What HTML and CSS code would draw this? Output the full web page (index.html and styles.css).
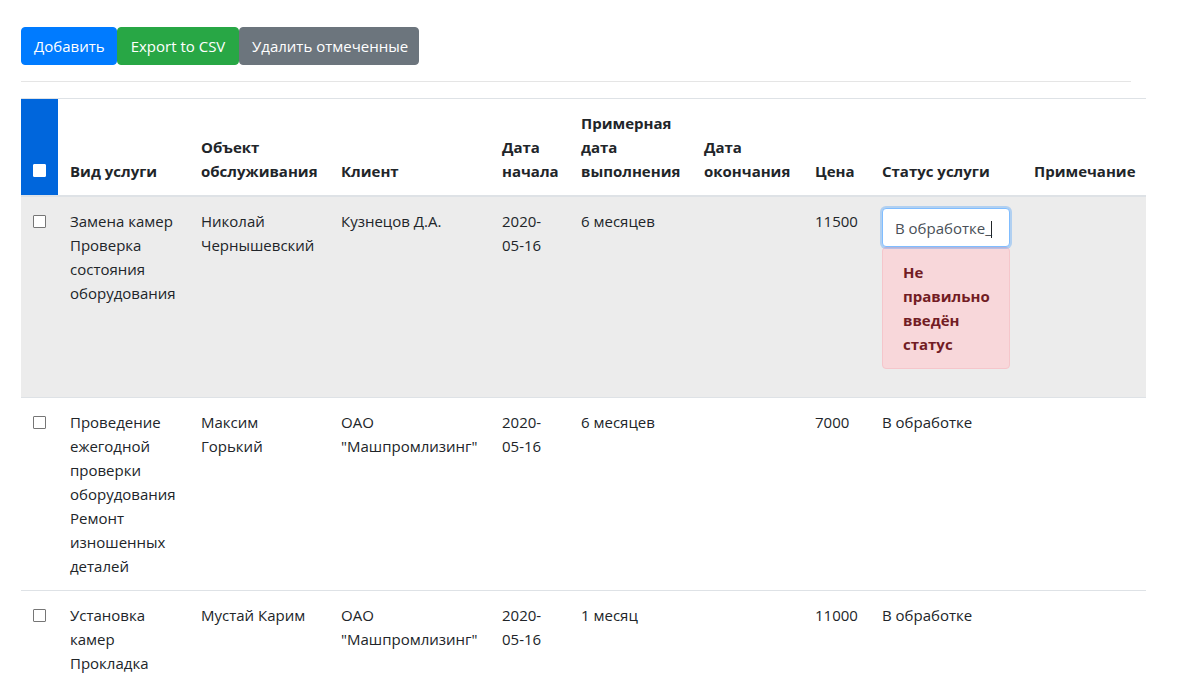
FILE: index.html
```html
<!DOCTYPE html>
<html lang="ru">
<head>
<meta charset="utf-8">
<title>Услуги</title>
<link rel="stylesheet" href="styles.css">
</head>
<body>
<div class="page">
  <div class="toolbar">
    <button class="btn btn-blue">Добавить</button><button class="btn btn-green">Export to CSV</button><button class="btn btn-gray">Удалить отмеченные</button>
  </div>
  <hr class="divider">
  <table class="grid">
    <colgroup>
      <col class="c1"><col class="c2"><col class="c3"><col class="c4"><col class="c5"><col class="c6"><col class="c7"><col class="c8"><col class="c9"><col class="c10">
    </colgroup>
    <thead>
      <tr>
        <th class="th-check"><span class="box box-white"></span></th>
        <th>Вид услуги</th>
        <th>Объект обслуживания</th>
        <th>Клиент</th>
        <th>Дата начала</th>
        <th>Примерная дата выполнения</th>
        <th>Дата окончания</th>
        <th>Цена</th>
        <th>Статус услуги</th>
        <th>Примечание</th>
      </tr>
    </thead>
    <tbody>
      <tr class="active">
        <td class="td-check"><span class="box"></span></td>
        <td>Замена камер Проверка состояния оборудования</td>
        <td>Николай Чернышевский</td>
        <td>Кузнецов Д.А.</td>
        <td>2020-05-16</td>
        <td>6 месяцев</td>
        <td></td>
        <td>11500</td>
        <td>
          <div class="field">В обработке<span class="caret">_</span><span class="cursor"></span></div>
          <div class="alert">Не правильно введён статус</div>
        </td>
        <td></td>
      </tr>
      <tr>
        <td class="td-check"><span class="box"></span></td>
        <td>Проведение ежегодной проверки оборудования Ремонт изношенных деталей</td>
        <td>Максим Горький</td>
        <td>ОАО "Машпромлизинг"</td>
        <td>2020-05-16</td>
        <td>6 месяцев</td>
        <td></td>
        <td>7000</td>
        <td>В обработке</td>
        <td></td>
      </tr>
      <tr>
        <td class="td-check"><span class="box"></span></td>
        <td>Установка камер Прокладка кабеля</td>
        <td>Мустай Карим</td>
        <td>ОАО "Машпромлизинг"</td>
        <td>2020-05-16</td>
        <td>1 месяц</td>
        <td></td>
        <td>11000</td>
        <td>В обработке</td>
        <td></td>
      </tr>
    </tbody>
  </table>
</div>
</body>
</html>
```
FILE: styles.css
```css
html, body {
  margin: 0;
  padding: 0;
  background: #fff;
}
body {
  font-family: "Open Sans", "Noto Sans", sans-serif;
  font-size: 15px;
  line-height: 24px;
  color: #212529;
}
.page {
  padding: 27px 0 0 21px;
}
.toolbar {
  display: flex;
  height: 38px;
}
.btn {
  font-family: inherit;
  font-size: 15px;
  line-height: 24px;
  height: 38px;
  padding: 6px 12px;
  border: 1px solid transparent;
  border-radius: 4px;
  color: #fff;
  margin: 0;
  white-space: nowrap;
  cursor: pointer;
}
.btn-blue { background: #007bff; border-color: #007bff; width: 96px; }
.btn-green { background: #28a745; border-color: #28a745; width: 122px; }
.btn-gray { background: #6c757d; border-color: #6c757d; width: 180px; }
.divider {
  width: 1110px;
  margin: 16px 0;
  border: 0;
  border-top: 1px solid rgba(0,0,0,0.1);
}
.grid {
  width: 1125px;
  table-layout: fixed;
  border-collapse: collapse;
}
.c1 { width: 37px; }
.c2 { width: 131px; }
.c3 { width: 140px; }
.c4 { width: 161px; }
.c5 { width: 79px; }
.c6 { width: 123px; }
.c7 { width: 111px; }
.c8 { width: 67px; }
.c9 { width: 152px; }
.c10 { width: 124px; }
.grid th, .grid td {
  padding: 12px;
  text-align: left;
  vertical-align: top;
  border-top: 1px solid #dee2e6;
}
.grid th {
  vertical-align: bottom;
  font-weight: 700;
  border-bottom: 2px solid #dee2e6;
}
.grid th.th-check {
  background: #0066dc;
  padding: 12px 12px 16px;
}
.box {
  display: inline-block;
  width: 13px;
  height: 13px;
  box-sizing: border-box;
  border: 1px solid #767676;
  border-radius: 1px;
  background: #fff;
  vertical-align: middle;
}
.box-white {
  border-color: #fff;
}
.td-check .box {
  margin-top: 6px;
  display: block;
}
.th-check .box {
  display: block;
  margin-bottom: 2px;
}
.grid tr.active td {
  background: #ececec;
}
.field {
  position: relative;
  box-sizing: border-box;
  height: 39px;
  margin-top: -1px;
  padding: 7px 12px;
  border: 1px solid #80bdff;
  border-radius: 4px;
  background: #fff;
  box-shadow: 0 0 0 2px rgba(0,123,255,0.25);
  color: #495057;
  line-height: 24px;
  white-space: nowrap;
}
.caret { color: #495057; }
.cursor {
  display: inline-block;
  width: 1px;
  height: 17px;
  background: #212529;
  vertical-align: -4px;
  margin-left: -1px;
}
.alert {
  box-sizing: border-box;
  height: 122px;
  margin-bottom: 16px;
  padding: 12px 20px;
  background: #f8d7da;
  border: 1px solid #f5c6cb;
  border-radius: 4px;
  color: #721c24;
  font-weight: 700;
}
```
